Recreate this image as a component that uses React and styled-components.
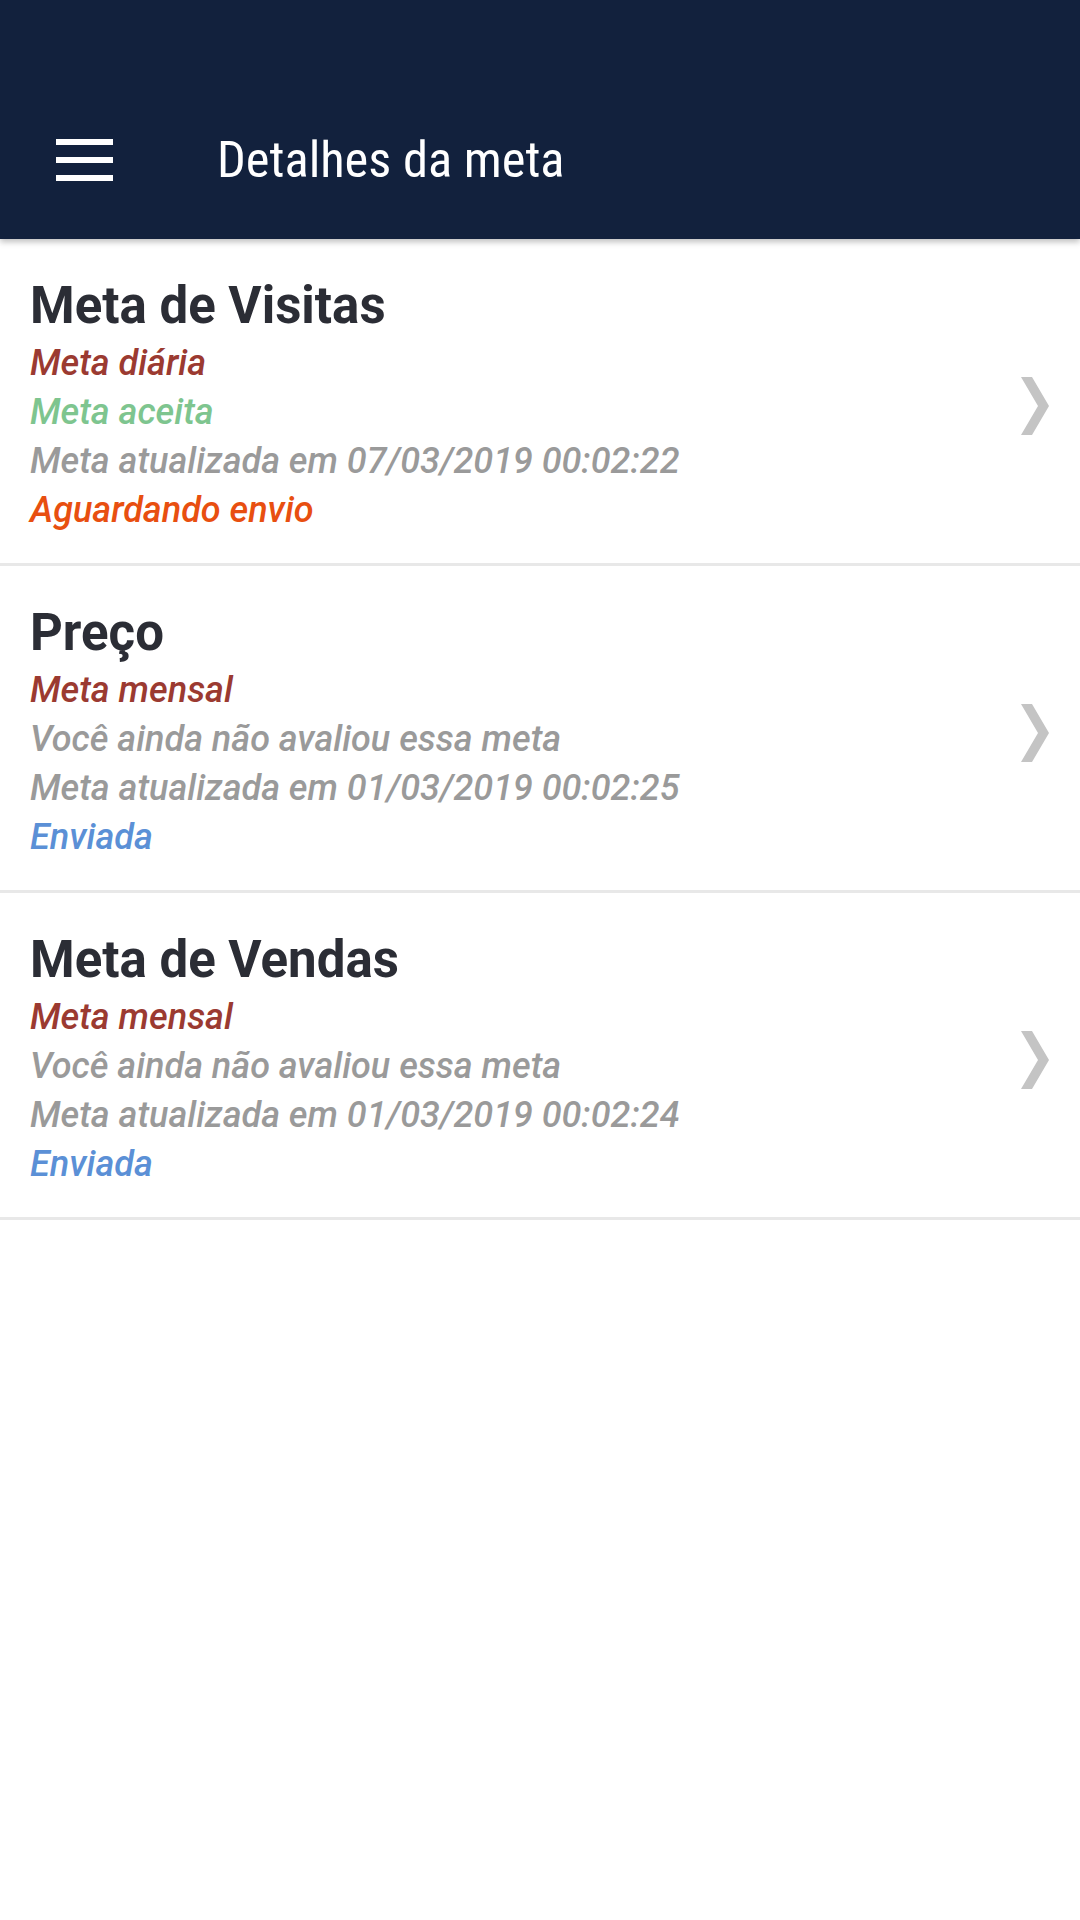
import React from 'react';
import styled, { createGlobalStyle } from 'styled-components';

const GlobalStyle = createGlobalStyle`
  html, body {
    margin: 0;
    padding: 0;
    background: #ffffff;
  }
  body {
    font-family: Roboto, 'Liberation Sans', sans-serif;
  }
`;

const Screen = styled.div`
  width: 1080px;
  min-height: 1920px;
  background: #ffffff;
`;

const Toolbar = styled.header`
  height: 239px;
  background-color: #12213d;
  display: flex;
  align-items: flex-end;
  padding: 0 0 40px 56px;
  box-sizing: border-box;
  box-shadow: 0 3px 6px rgba(0, 0, 0, 0.25);
  position: relative;
  z-index: 1;
`;

const MenuButton = styled.div`
  width: 57px;
  height: 42px;
  display: flex;
  flex-direction: column;
  justify-content: space-between;
  margin-bottom: 18px;

  span {
    display: block;
    height: 6px;
    background: #ffffff;
  }
`;

const Title = styled.h1`
  margin: 0 0 0 104px;
  font-family: 'Roboto Condensed', Roboto, sans-serif;
  font-stretch: condensed;
  font-weight: 400;
  font-size: 50.5px;
  line-height: 78px;
  color: #ffffff;
`;

const List = styled.div`
  display: flex;
  flex-direction: column;
`;

const Item = styled.div`
  display: flex;
  align-items: center;
  justify-content: space-between;
  padding: 37px 31px 28px 30px;
  border-bottom: 3px solid #e8e8e8;
`;

const Texts = styled.div`
  display: flex;
  flex-direction: column;
`;

const ItemTitle = styled.div`
  font-family: Roboto, sans-serif;
  font-weight: 700;
  font-size: 51px;
  line-height: 60px;
  color: #2b2d35;
  margin-bottom: 3px;
`;

const Line = styled.div`
  font-family: Roboto, sans-serif;
  font-style: italic;
  font-weight: 500;
  font-size: 36px;
  line-height: 49px;
  color: ${(p) => p.color};
`;

const colors = {
  red: '#9b3a31',
  green: '#7ec58f',
  gray: '#9a9a9a',
  orange: '#e84f10',
  blue: '#5b90d6',
};

const Chevron = () => (
  <svg width="28" height="58" viewBox="0 0 28 58">
    <polygon points="0,0 11,0 28,29 11,58 0,58 17,29" fill="#c4c4c4" />
  </svg>
);

const goals = [
  {
    title: 'Meta de Visitas',
    lines: [
      ['Meta diária', 'red'],
      ['Meta aceita', 'green'],
      ['Meta atualizada em 07/03/2019 00:02:22', 'gray'],
      ['Aguardando envio', 'orange'],
    ],
  },
  {
    title: 'Preço',
    lines: [
      ['Meta mensal', 'red'],
      ['Você ainda não avaliou essa meta', 'gray'],
      ['Meta atualizada em 01/03/2019 00:02:25', 'gray'],
      ['Enviada', 'blue'],
    ],
  },
  {
    title: 'Meta de Vendas',
    lines: [
      ['Meta mensal', 'red'],
      ['Você ainda não avaliou essa meta', 'gray'],
      ['Meta atualizada em 01/03/2019 00:02:24', 'gray'],
      ['Enviada', 'blue'],
    ],
  },
];

export default function App() {
  return (
    <Screen>
      <GlobalStyle />
      <Toolbar>
        <MenuButton>
          <span />
          <span />
          <span />
        </MenuButton>
        <Title>Detalhes da meta</Title>
      </Toolbar>
      <List>
        {goals.map((g) => (
          <Item key={g.title}>
            <Texts>
              <ItemTitle>{g.title}</ItemTitle>
              {g.lines.map(([text, c]) => (
                <Line key={text} color={colors[c]}>
                  {text}
                </Line>
              ))}
            </Texts>
            <Chevron />
          </Item>
        ))}
      </List>
    </Screen>
  );
}
